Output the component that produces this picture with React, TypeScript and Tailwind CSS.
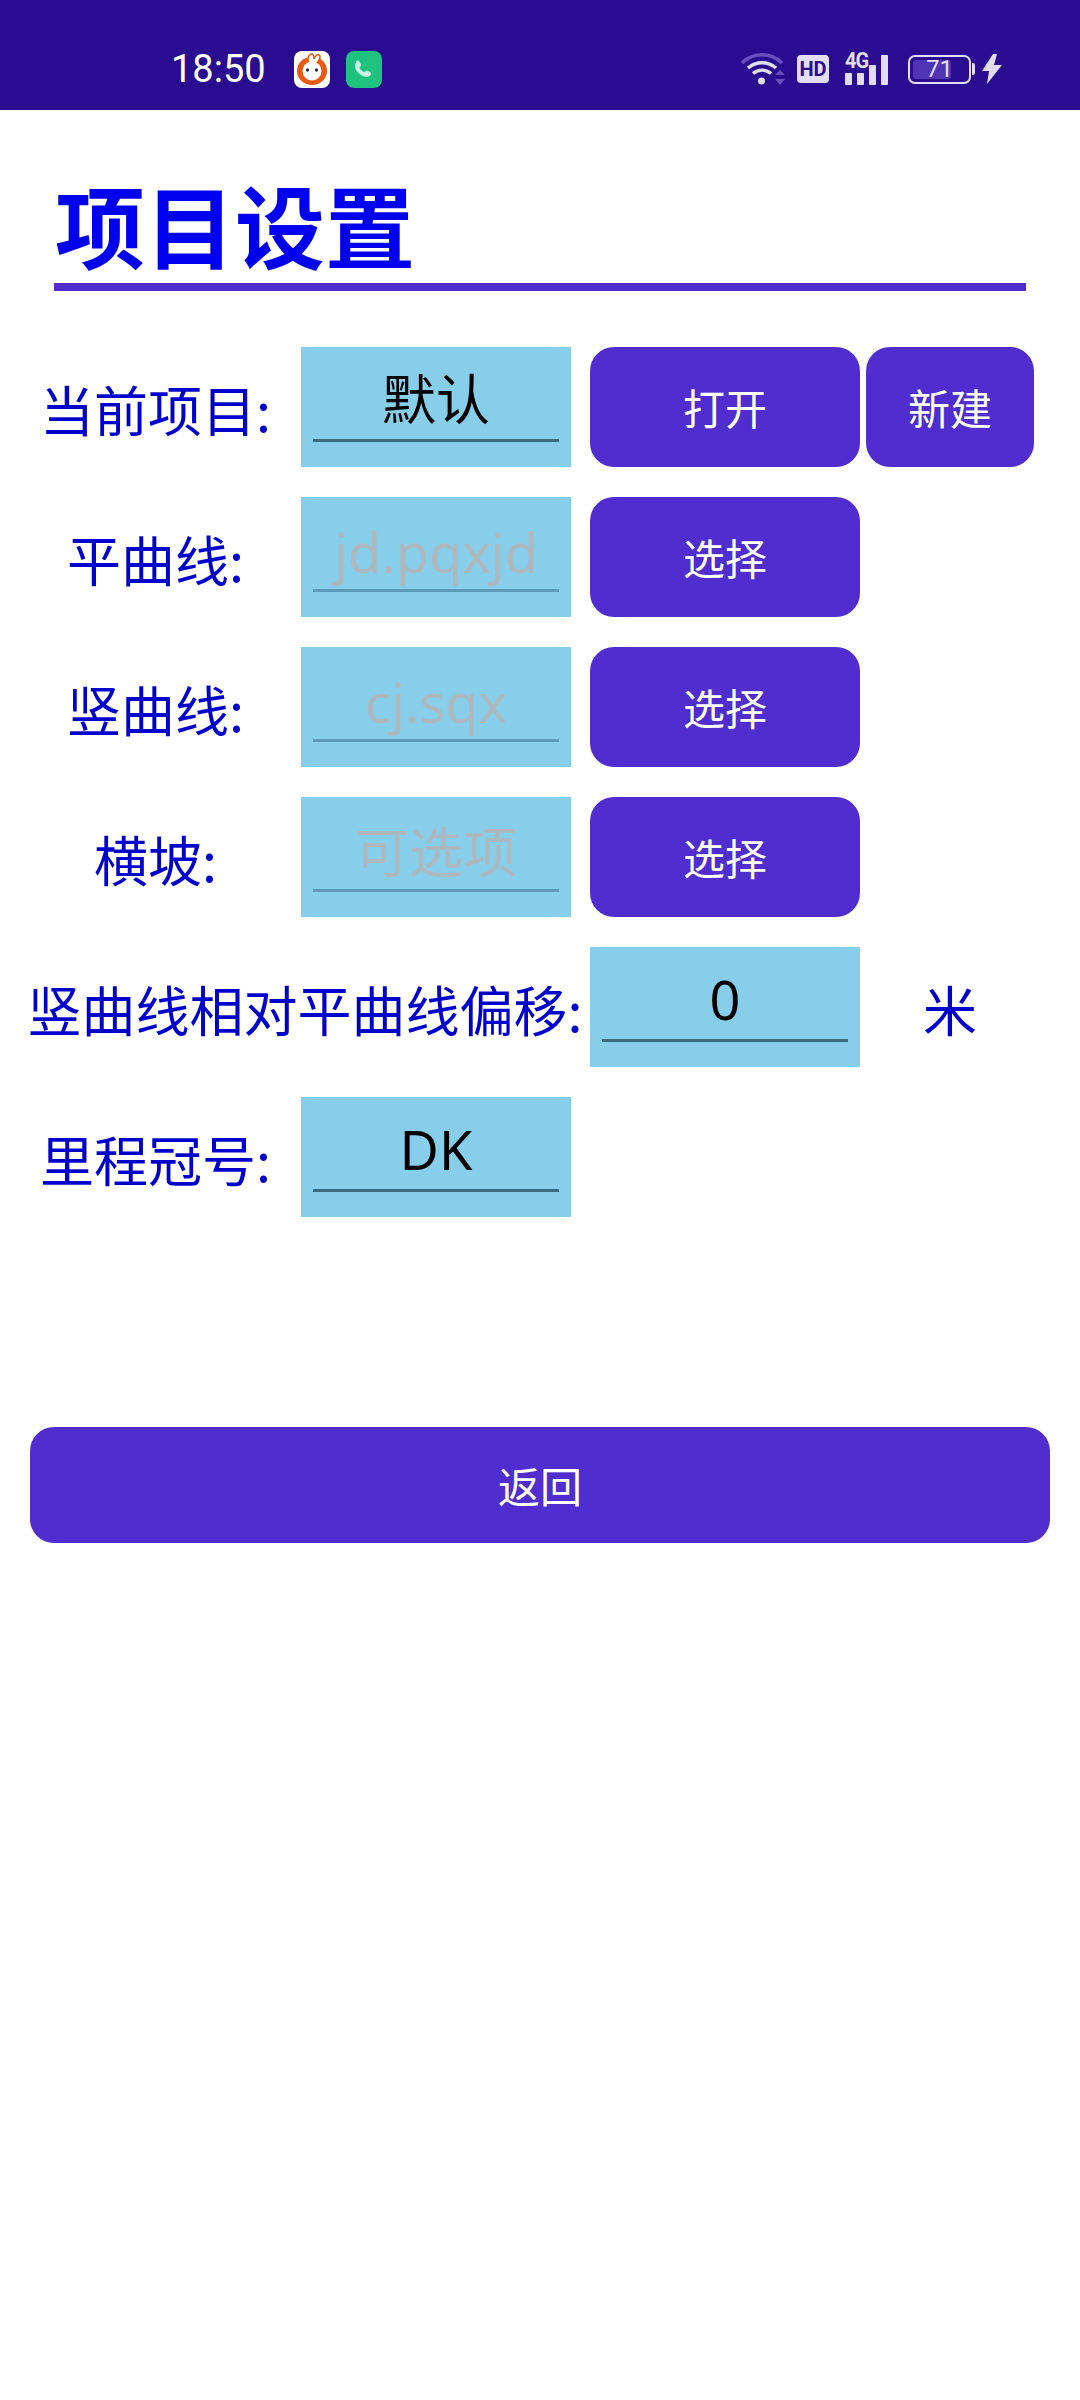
const cjk = "font-['Noto_Sans_CJK_SC','Noto_Sans',sans-serif]";

// status bar drawings
const RabbitIcon = () => (
  <svg viewBox="0 0 36 37" className="w-[36px] h-[37px]">
    <rect width="36" height="37" rx="8" fill="#fff" />
    <path d="M18 6c-9 0-15 6-15 14 0 8 7 14 15 14s15-6 15-14C33 12 27 6 18 6z" fill="#ea5a12" />
    <path d="M15 12c-2-4-1-8 2-9 2 0 3 2 3 5 1-3 3-5 5-4 2 1 1 5-2 8z" fill="#fff" stroke="#ea5a12" strokeWidth="1.500" />
    <circle cx="18" cy="20" r="9.500" fill="#fff" />
    <circle cx="13.500" cy="19" r="1.700" fill="#333" />
    <circle cx="22.500" cy="19" r="1.700" fill="#333" />
  </svg>
);

const PhoneIcon = () => (
  <svg viewBox="0 0 36 37" className="w-[36px] h-[37px]">
    <rect width="36" height="37" rx="8" fill="#1fc37f" />
    <path d="M10 10.500c1.200-1.200 2.800-1.200 3.400 0l1.400 2.800c.4.800.2 1.500-.5 2.200l-.9.900c.9 2 2.600 3.700 4.800 4.800l.9-.9c.7-.7 1.400-.9 2.200-.5l2.800 1.400c1.200.6 1.200 2.200 0 3.400-1.300 1.300-3.200 1.700-5 1.100-6-2-9.500-5.500-10.200-10.200-.2-1.800.6-3.400 1.500-4z" fill="#c9f7e3" />
  </svg>
);

const WifiIcon = () => (
  <svg viewBox="0 0 44 32" className="w-[44px] h-[32px]">
    <path d="M1 10C12-1 30-1 41 10" fill="none" stroke="#6a4fc0" strokeWidth="3.500" />
    <path d="M7 15c8-7 20-7 28 0" fill="none" stroke="#e4dcfb" strokeWidth="3.500" />
    <path d="M12 20.500c5.500-4.500 12.500-4.500 18 0" fill="none" stroke="#e4dcfb" strokeWidth="3.500" />
    <circle cx="20.500" cy="28" r="3.500" fill="#e4dcfb" />
    <path d="M39 17l5 5H34zM39 32l-5-6h10z" fill="#6a4fc0" />
  </svg>
);

const SignalIcon = () => (
  <div className="relative w-[47px] h-[32px]">
    <span className="absolute left-0 top-[-3px] font-['Roboto',sans-serif] font-bold text-[20px] leading-[20px] tracking-[-1px] text-[#e4dcfb] scale-y-110">4G</span>
    <div className="absolute inset-0 flex items-end gap-[5px]">
      <div className="w-[7px] h-[12px] bg-[#e4dcfb] rounded-[1px]" />
      <div className="w-[7px] h-[12px] bg-[#e4dcfb] rounded-[1px]" />
      <div className="w-[7px] h-[20px] bg-[#e4dcfb] rounded-[1px]" />
      <div className="w-[7px] h-[30px] bg-[#e4dcfb] rounded-[1px]" />
    </div>
  </div>
);

const BatteryIcon = () => (
  <div className="flex items-center gap-[1px]">
    <div className="relative w-[63px] h-[29px] rounded-[7px] border-2 border-[#e4dcfb] p-[3px]">
      <div className="h-full w-[71%] rounded-[3px] bg-[#4f35b5]" />
      <span className="absolute inset-0 flex items-center justify-center font-['Roboto',sans-serif] text-[24px] leading-none text-[#e4dcfb]">71</span>
    </div>
    <div className="w-[3px] h-[12px] rounded-r-[2px] bg-[#e4dcfb]" />
  </div>
);

const BoltIcon = () => (
  <svg viewBox="0 0 20 30" className="w-[20px] h-[30px]">
    <path d="M11 0L0 17h7l-2 13L20 11h-8l3-11z" fill="#e4dcfb" />
  </svg>
);

const StatusBar = () => (
  <div className="h-[110px] bg-[#2a0c91] flex items-center pt-[28px] pl-[171px]">
    <span className="w-[94px] font-['Roboto',sans-serif] text-[38px] leading-none text-white whitespace-nowrap">18:50</span>
    <div className="ml-[29px] flex gap-[16px]">
      <RabbitIcon />
      <PhoneIcon />
    </div>
    <div className="ml-[359px] flex items-center">
      <WifiIcon />
      <div className="ml-[12px] w-[32px] h-[28px] rounded-[4px] bg-[#e4dcfb] flex items-center justify-center font-['Roboto',sans-serif] font-bold text-[20px] leading-none text-[#2a0c91]">HD</div>
      <div className="ml-[16px]"><SignalIcon /></div>
      <div className="ml-[16px]"><BatteryIcon /></div>
      <div className="ml-[7px]"><BoltIcon /></div>
    </div>
  </div>
);

const Field = ({ value, placeholder }: { value: string; placeholder?: boolean }) => (
  <div className="w-[270px] h-[120px] shrink-0 bg-[#87ceeb] px-[12px] pt-[17px]">
    <div className={`h-[78px] border-b-[3px] flex items-center justify-center font-['Noto_Sans','Noto_Sans_CJK_SC',sans-serif] text-[54px] leading-none ${placeholder ? 'border-[#5d9bb8] text-[#aeb9bf]' : 'pb-[6px] border-[#3c6a7e] text-black'}`}>
      {value}
    </div>
  </div>
);

const Label = ({ text }: { text: string }) => (
  <div className={`w-[271px] shrink-0 pt-[3px] text-center ${cjk} text-[54px] leading-none text-[#0000cd]`}>{text}</div>
);

const Button = ({ text, wide = true }: { text: string; wide?: boolean }) => (
  <button className={`${wide ? 'w-[270px]' : 'w-[168px]'} h-[120px] shrink-0 rounded-[24px] bg-[#4f2dcf] ${cjk} text-[42px] leading-none text-white`}>
    {text}
  </button>
);

const App = () => {
  return (
    <div className="w-[1080px] h-[2400px] bg-white">
      <StatusBar />

      <div className="pl-[54px] pt-[68px]">
        <h1 className={`ml-[1px] ${cjk} font-bold text-[90px] leading-[90px] text-[#0000ee]`}>项目设置</h1>
        <div className="w-[972px] h-[8px] mt-[15px] bg-[#4f2dcf]" />
      </div>

      <div className="mt-[56px] pl-[20px] flex flex-col gap-[30px]">
        <div className="flex items-center">
          <Label text="当前项目:" />
          <div className="ml-[10px]"><Field value="默认" /></div>
          <div className="ml-[19px]"><Button text="打开" /></div>
          <div className="ml-[6px]"><Button text="新建" wide={false} /></div>
        </div>
        <div className="flex items-center">
          <Label text="平曲线:" />
          <div className="ml-[10px]"><Field value="jd.pqxjd" placeholder /></div>
          <div className="ml-[19px]"><Button text="选择" /></div>
        </div>
        <div className="flex items-center">
          <Label text="竖曲线:" />
          <div className="ml-[10px]"><Field value="cj.sqx" placeholder /></div>
          <div className="ml-[19px]"><Button text="选择" /></div>
        </div>
        <div className="flex items-center">
          <Label text="横坡:" />
          <div className="ml-[10px]"><Field value="可选项" placeholder /></div>
          <div className="ml-[19px]"><Button text="选择" /></div>
        </div>
        <div className="flex items-center">
          <div className={`w-[570px] shrink-0 pt-[3px] text-center whitespace-nowrap ${cjk} text-[54px] leading-none text-[#0000cd]`}>竖曲线相对平曲线偏移:</div>
          <Field value="0" />
          <div className={`ml-[6px] pt-[3px] w-[168px] text-center ${cjk} text-[54px] leading-none text-[#0000cd]`}>米</div>
        </div>
        <div className="flex items-center">
          <Label text="里程冠号:" />
          <div className="ml-[10px]"><Field value="DK" /></div>
        </div>
      </div>

      <div className="mt-[210px] px-[30px]">
        <button className={`w-full h-[116px] rounded-[24px] bg-[#4f2dcf] ${cjk} text-[42px] leading-none text-white`}>返回</button>
      </div>
    </div>
  );
};

export default App;
